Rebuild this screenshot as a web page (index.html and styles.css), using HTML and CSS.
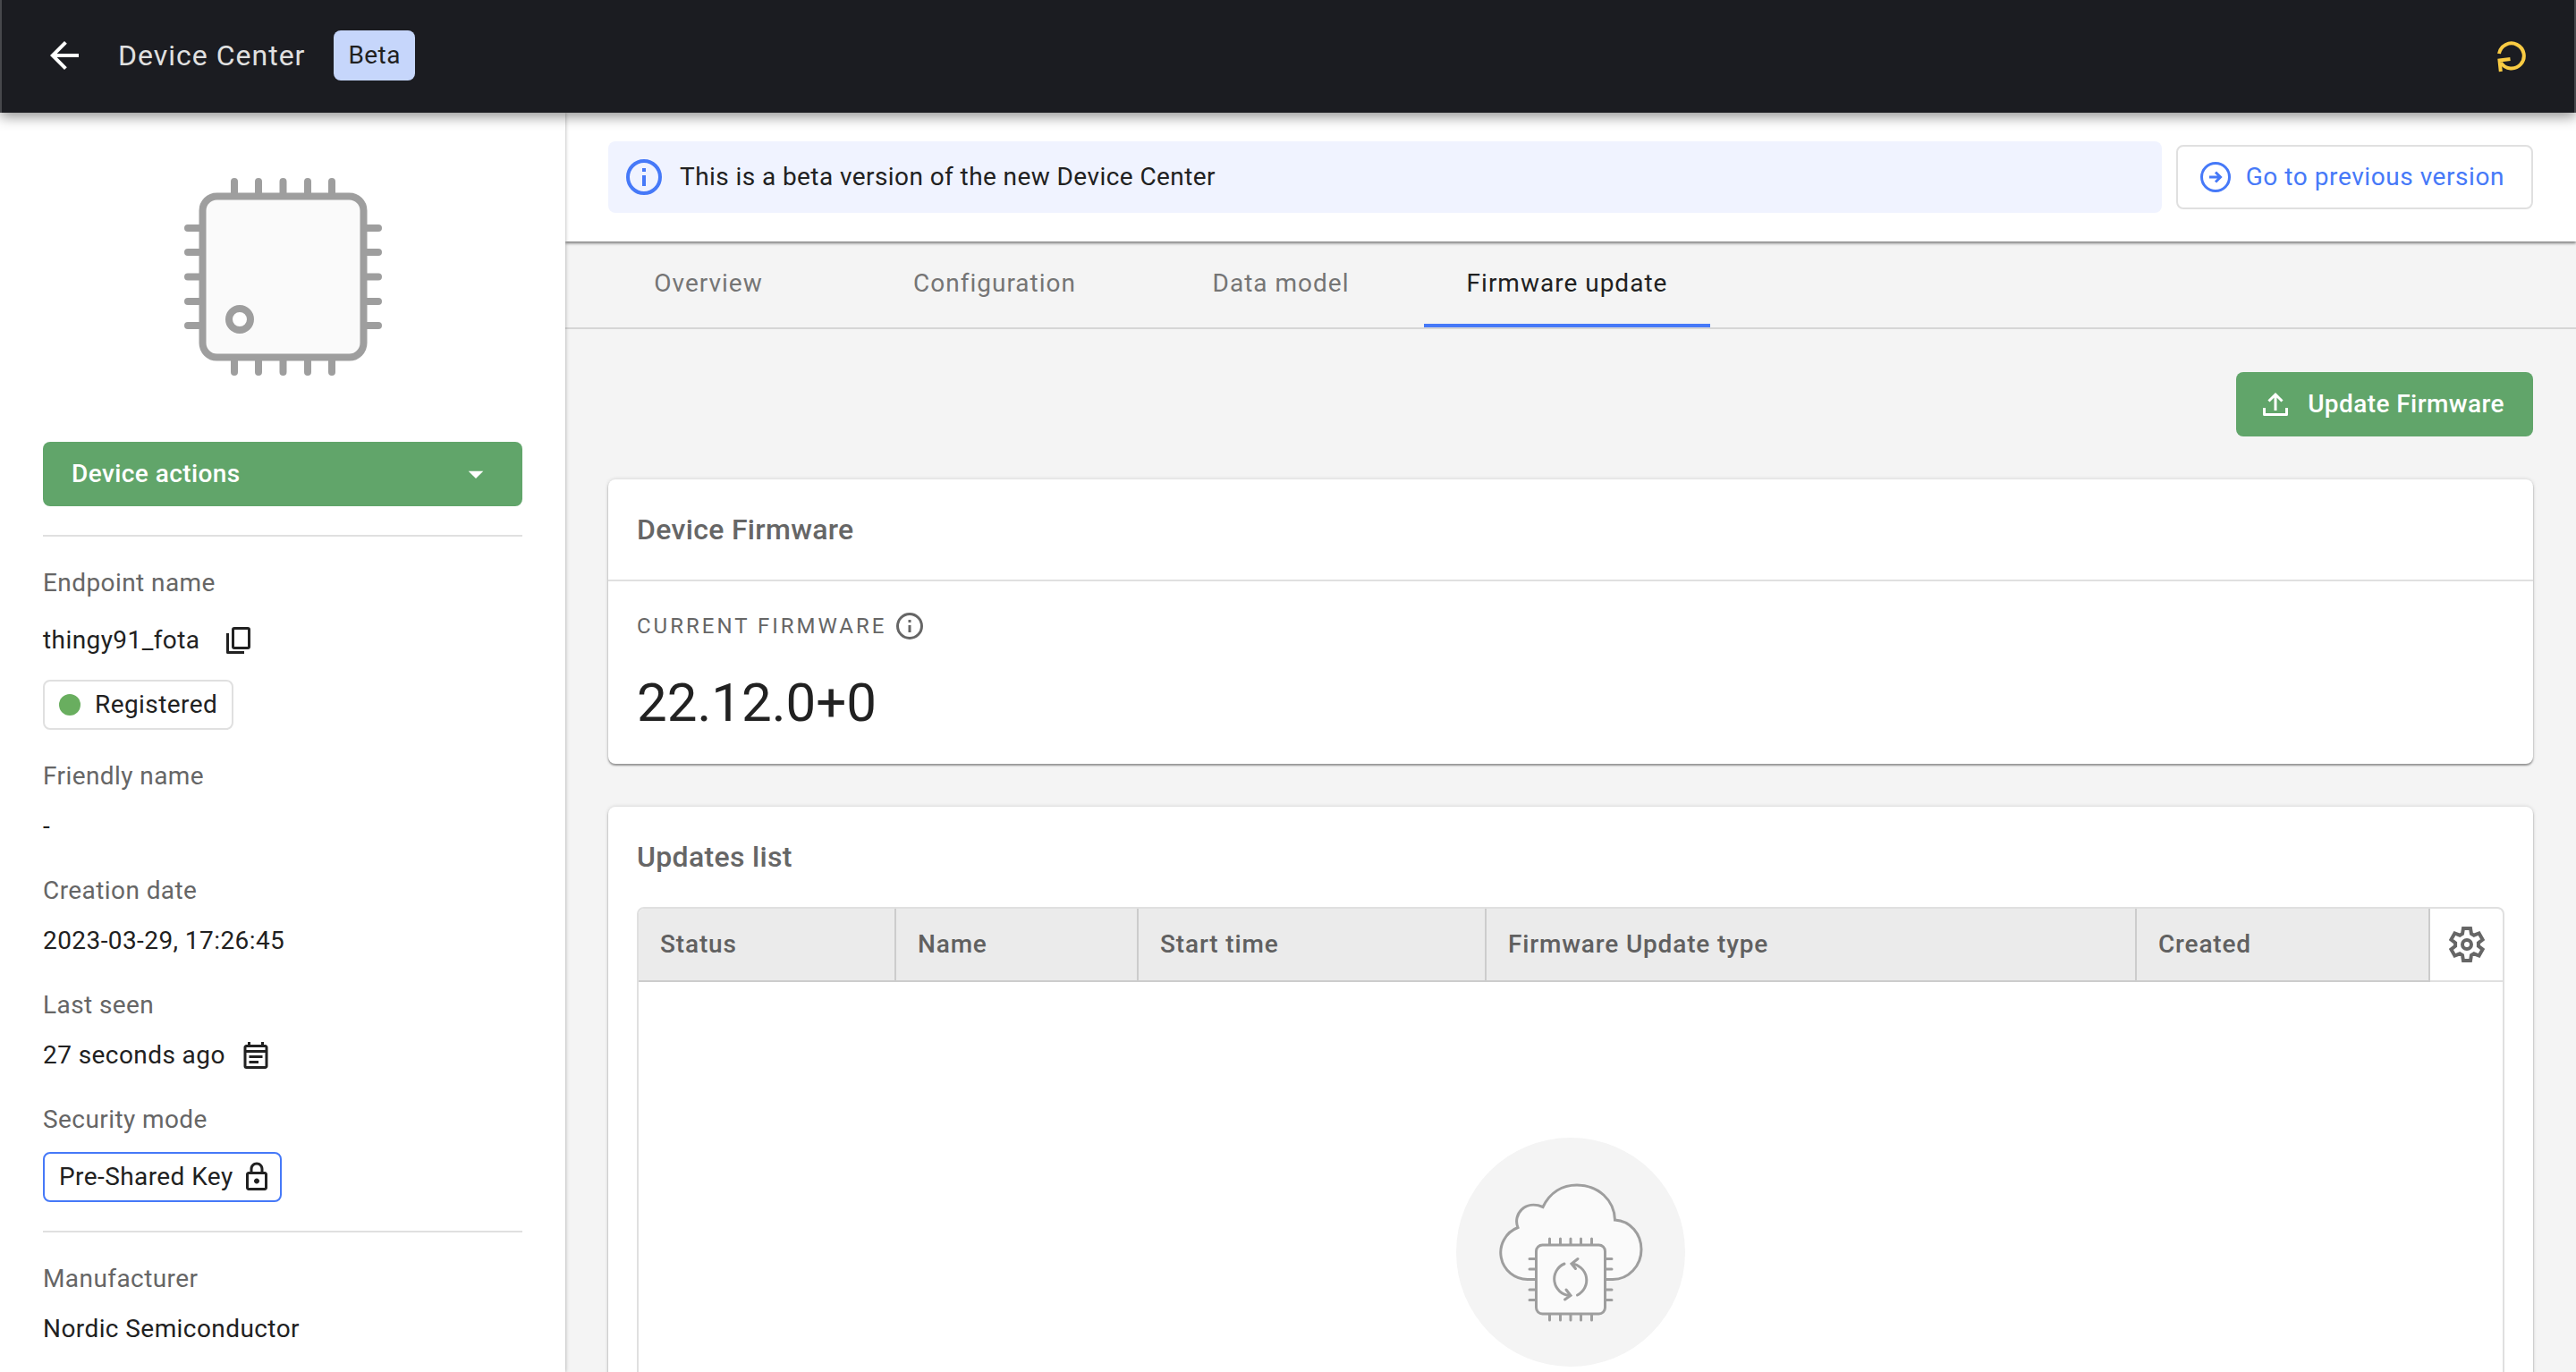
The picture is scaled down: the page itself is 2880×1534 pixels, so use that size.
FILE: index.html
```html
<!DOCTYPE html>
<html lang="en">
<head>
<meta charset="utf-8">
<meta name="viewport" content="width=device-width, initial-scale=1">
<title>Device Center</title>
<link rel="stylesheet" href="styles.css">
</head>
<body>
<div class="app">
  <header class="topbar">
    <button class="icon-button" type="button" aria-label="Back">
      <svg class="icon-48" viewBox="0 0 24 24" fill="currentColor"><path d="M20 11H7.83l5.59-5.59L12 4l-8 8 8 8 1.41-1.41L7.83 13H20z"/></svg>
    </button>
    <h1 class="topbar-title">Device Center</h1>
    <span class="badge">Beta</span>
    <button class="icon-button topbar-refresh" type="button" aria-label="Refresh">
      <svg class="icon-40" viewBox="0 0 40 40" fill="none" stroke="currentColor" stroke-width="4"><path d="M6 18A14 14 0 1 1 8 28"/><path d="M18.500 24 6.500 25.500 7.800 38"/></svg>
    </button>
  </header>

  <div class="body">
    <aside class="sidebar">
      <svg class="device-image" viewBox="0 0 221 221" fill="none" stroke="#9e9e9e" stroke-width="8" stroke-linecap="round">
        <path d="M56 4V217M83 4V217M110.500 4V217M138 4V217M165 4V217M4 56H217M4 83H217M4 110.500H217M4 138H217M4 165H217"/>
        <rect x="20.500" y="20.500" width="180" height="180" rx="16" fill="#fafafa"/>
        <circle cx="62" cy="158" r="12" fill="#fff"/>
      </svg>

      <button class="button button-primary actions" type="button" aria-haspopup="menu">
        Device actions
        <svg class="icon-40" viewBox="0 0 24 24" fill="currentColor"><path d="m7 10 5 5 5-5z"/></svg>
      </button>

      <hr class="divider">

      <dl class="details">
        <div class="detail">
          <dt>Endpoint name</dt>
          <dd class="detail-tall">thingy91_fota
            <button class="icon-button" type="button" aria-label="Copy endpoint name">
              <svg class="icon-32" viewBox="0 0 32 32" fill="none" stroke="currentColor" stroke-width="3"><rect x="9.500" y="2.500" width="18" height="22" rx="1.500"/><path d="M3.500 8V29.500H22" stroke-linejoin="round"/></svg>
            </button>
          </dd>
          <dd class="chip"><span class="dot"></span>Registered</dd>
        </div>
        <div class="detail">
          <dt>Friendly name</dt>
          <dd>-</dd>
        </div>
        <div class="detail">
          <dt>Creation date</dt>
          <dd>2023-03-29, 17:26:45</dd>
        </div>
        <div class="detail">
          <dt>Last seen</dt>
          <dd class="detail-icon">27 seconds ago
            <svg class="icon-36" viewBox="0 0 24 24" fill="currentColor"><path d="M19 4h-1V2h-2v2H8V2H6v2H5c-1.110 0-2 .9-2 2v14a2 2 0 0 0 2 2h14c1.100 0 2-.9 2-2V6c0-1.100-.9-2-2-2zm0 16H5V10h14v10zm0-12H5V6h14v2zM7 12h10v2H7zm0 4h7v2H7z"/></svg>
          </dd>
        </div>
        <div class="detail">
          <dt>Security mode</dt>
          <dd class="chip chip-blue">Pre-Shared Key
            <svg class="icon-36" viewBox="0 0 24 24" fill="currentColor"><path d="M18 8h-1V6c0-2.760-2.240-5-5-5S7 3.240 7 6v2H6c-1.100 0-2 .9-2 2v10c0 1.100.9 2 2 2h12c1.100 0 2-.9 2-2V10c0-1.100-.9-2-2-2zM9 6c0-1.660 1.340-3 3-3s3 1.340 3 3v2H9V6zm9 14H6V10h12v10zm-6-3c1.100 0 2-.9 2-2s-.9-2-2-2-2 .9-2 2 .9 2 2 2z"/></svg>
          </dd>
        </div>
      </dl>

      <hr class="divider">

      <dl class="details">
        <div class="detail">
          <dt>Manufacturer</dt>
          <dd>Nordic Semiconductor</dd>
        </div>
      </dl>
    </aside>

    <main class="main">
      <div class="notice-bar">
        <p class="notice">
          <svg class="icon-40" viewBox="0 0 40 40" fill="none" stroke="currentColor" stroke-width="4"><circle cx="20" cy="20" r="18"/><path d="M20 18v12M20 10v4"/></svg>
          This is a beta version of the new Device Center
        </p>
        <button class="button button-outline" type="button">
          <svg class="icon-36" viewBox="0 0 36 36" fill="none" stroke="currentColor" stroke-width="3"><circle cx="18" cy="18" r="15.500"/><path d="M11 18h12M18 12.500l5.500 5.500-5.500 5.500"/></svg>
          Go to previous version
        </button>
      </div>

      <nav class="tabs" role="tablist">
        <button class="tab" type="button" role="tab" aria-selected="false">Overview</button>
        <button class="tab" type="button" role="tab" aria-selected="false">Configuration</button>
        <button class="tab" type="button" role="tab" aria-selected="false">Data model</button>
        <button class="tab tab-active" type="button" role="tab" aria-selected="true">Firmware update</button>
      </nav>

      <div class="content">
        <button class="button button-primary update" type="button">
          <svg class="icon-36" viewBox="0 0 36 36" fill="none" stroke="currentColor" stroke-width="3"><path d="M5.500 22v7.500h25V22" stroke-linejoin="round"/><path d="M18 25V8M10.500 14.500 18 7l7.500 7.500"/></svg>
          Update Firmware
        </button>

        <section class="card">
          <h2 class="card-title card-title-ruled">Device Firmware</h2>
          <div class="card-body">
            <p class="overline">Current firmware
              <svg class="icon-36" viewBox="0 0 36 36" fill="none" stroke="currentColor" stroke-width="3"><circle cx="18" cy="18" r="13.500"/><path d="M18 17v8M18 11v3"/></svg>
            </p>
            <p class="version">22.12.0+0</p>
          </div>
        </section>

        <section class="card">
          <h2 class="card-title">Updates list</h2>
          <div class="table-frame">
            <table class="table">
              <colgroup><col class="col-status"><col class="col-name"><col class="col-start"><col><col class="col-created"><col class="col-settings"></colgroup>
              <thead>
                <tr>
                  <th>Status</th><th>Name</th><th>Start time</th><th>Firmware Update type</th><th>Created</th>
                  <td class="settings">
                    <button class="icon-button" type="button" aria-label="Table settings">
                      <svg class="icon-40" viewBox="-20 -20 40 40" fill="none" stroke="currentColor" stroke-width="4"><path d="M-5-12-4-18H4L5-12 7.900-10.300 13.600-12.500 17.600-5.500 12.900-1.700V1.700L17.600 5.500 13.600 12.500 7.900 10.300 5 12 4 18H-4L-5 12-7.900 10.300-13.600 12.500-17.600 5.500-12.900 1.700V-1.700L-17.600-5.500-13.600-12.500-7.900-10.300Z"/><circle r="5"/></svg>
                    </button>
                  </td>
                </tr>
              </thead>
            </table>
            <div class="empty">
              <svg class="empty-image" viewBox="0 0 256 256" fill="none" stroke="#9e9e9e" stroke-width="3" stroke-linecap="round">
                <circle cx="128" cy="128" r="128" fill="#f4f4f4" stroke="none"/>
                <path stroke-linecap="butt" fill="#fafafa" d="M90 158.500H80A30 30 0 0 1 69 100.500C63 86 77 69 97 77.500C105 61 119 53 135 53C159 53 177 70 177.500 92C195 93 207 108 207 125C207 143 193 158.500 175 158.500Z"/>
                <path d="M104.500 113V204M116.500 113V204M128 113V204M139.500 113V204M151.500 113V204M82 135.500H174M82 147H174M82 158.500H174M82 170H174M82 181.500H174"/>
                <rect x="89.500" y="120" width="77" height="77" rx="7" fill="#fafafa"/>
                <path d="M121 141A18.500 18.500 0 0 0 127 176.500M121.500 181 128 176.500 123 170M135.500 176A18.500 18.500 0 0 0 129 141M136 135.500 129 141 133.500 146.500"/>
              </svg>
            </div>
          </div>
        </section>
      </div>
    </main>
  </div>
</div>
</body>
</html>
```
FILE: styles.css
```css
* { box-sizing: border-box; }

:root {
  --text: #212121;
  --muted: #666;
  --line: #e0e0e0;
  --blue: #4679f8;
  --green: #61a56a;
  --shadow: 0 2px 2px rgba(0, 0, 0, 0.35), 0 0 4px rgba(0, 0, 0, 0.16);
}

body, h1, h2, p, dl, dd {
  margin: 0;
}

body {
  background: #f4f4f4;
  color: var(--text);
  font: 400 28px/40px Roboto, "Noto Sans", sans-serif;
  letter-spacing: 0.015em;
}

button {
  font: inherit;
  letter-spacing: inherit;
  color: inherit;
  border: 0;
  background: none;
  padding: 0;
  cursor: pointer;
}

svg { display: block; flex: none; }
.icon-32 { width: 32px; height: 32px; }
.icon-36 { width: 36px; height: 36px; }
.icon-40 { width: 40px; height: 40px; }
.icon-48 { width: 48px; height: 48px; }
.icon-button { display: flex; }

.app {
  display: flex;
  flex-direction: column;
  height: 100vh;
  overflow: hidden;
}

/* Top bar */
.topbar {
  position: relative;
  z-index: 2;
  flex: none;
  display: flex;
  align-items: center;
  padding: 34px 50px 36px 46px;
  background: #1b1c21;
  border: solid #47484c;
  border-width: 0 2px;
  color: #fff;
  box-shadow: 0 4px 14px rgba(0, 0, 0, 0.45);
}
.topbar-title {
  margin: 0 32px 0 36px;
  color: #e0e0e0;
  font-size: 32px;
  font-weight: 400;
  letter-spacing: 1px;
}
.badge {
  padding: 8px 16px;
  border-radius: 8px;
  background: #c6d6fb;
  color: var(--text);
}
.topbar-refresh {
  margin-left: auto;
  color: #f9cb43;
}

.body {
  flex: 1;
  display: flex;
  min-height: 0;
}

/* Sidebar */
.sidebar {
  position: relative;
  z-index: 1;
  flex: none;
  width: 632px;
  padding: 73px 48px 32px;
  background: #fff;
  box-shadow: 0 0 4px rgba(0, 0, 0, 0.35);
  overflow: hidden;
}
.device-image {
  width: 221px;
  height: 221px;
  margin: 0 auto 74px;
}
.button {
  display: flex;
  align-items: center;
  min-height: 72px;
  padding: 0 32px;
  border-radius: 8px;
  font-weight: 500;
}
.button-primary {
  background: var(--green);
  color: #fff;
}
.actions {
  justify-content: space-between;
  width: 100%;
}
.divider {
  height: 2px;
  margin: 32px 0;
  border: 0;
  background: var(--line);
}
.details {
  display: flex;
  flex-direction: column;
  gap: 32px;
}
.detail {
  display: flex;
  flex-direction: column;
  align-items: flex-start;
  gap: 16px;
}
.detail dt { color: var(--muted); }
.detail-tall,
.detail-icon {
  display: flex;
  align-items: center;
  gap: 16px;
}
.detail-tall {
  gap: 28px;
  height: 56px;
}
.chip {
  display: flex;
  align-items: center;
  gap: 16px;
  height: 56px;
  padding: 0 16px;
  border: 2px solid var(--line);
  border-radius: 8px;
}
.chip-blue {
  gap: 8px;
  padding: 0 8px 0 16px;
  border-color: var(--blue);
}
.dot {
  width: 24px;
  height: 24px;
  border-radius: 50%;
  background: #69ae5f;
}

/* Main column */
.main {
  flex: 1;
  min-width: 0;
}
.notice-bar {
  position: relative;
  display: flex;
  align-items: center;
  gap: 16px;
  padding: 32px 48px;
  background: #fff;
  box-shadow: 0 2px 3px rgba(0, 0, 0, 0.5);
}
.notice {
  flex: 1;
  display: flex;
  align-items: center;
  gap: 20px;
  padding: 20px;
  border-radius: 8px;
  background: #f0f3ff;
}
.notice svg { color: var(--blue); }
.button-outline {
  gap: 16px;
  padding: 0 30px 0 24px;
  border: 2px solid var(--line);
  color: var(--blue);
  font-weight: 400;
  letter-spacing: 0.02em;
}
.tabs {
  display: flex;
  border-bottom: 2px solid #d6d6d6;
}
.tab {
  width: 320px;
  height: 96px;
  padding-top: 2px;
  border-bottom: 4px solid transparent;
  color: #757575;
  letter-spacing: 1px;
}
.tab-active {
  border-color: var(--blue);
  color: var(--text);
}
.content {
  display: flex;
  flex-direction: column;
  gap: 48px;
  padding: 48px;
}
.update {
  align-self: flex-end;
  gap: 18px;
  padding: 0 32px 0 26px;
}

/* Cards */
.card {
  border-radius: 8px;
  background: #fff;
  box-shadow: var(--shadow);
}
.card-title {
  padding: 36px 32px;
  color: var(--muted);
  font-size: 32px;
  font-weight: 500;
  letter-spacing: 0.01em;
}
.card-title-ruled { border-bottom: 2px solid var(--line); }
.card-body { padding: 30px 32px; }
.overline {
  display: flex;
  align-items: center;
  gap: 8px;
  color: var(--muted);
  font-size: 24px;
  letter-spacing: 3px;
  text-transform: uppercase;
}
.version {
  margin-top: 28px;
  font-size: 60px;
  line-height: 76px;
  letter-spacing: 0;
}

/* Updates table */
.table-frame {
  margin: 0 32px 32px;
  border: 2px solid var(--line);
  border-radius: 8px;
  overflow: hidden;
}
.table {
  width: 100%;
  table-layout: fixed;
  border-collapse: separate;
  border-spacing: 0;
}
.col-status { width: 288px; }
.col-name { width: 271px; }
.col-start { width: 389px; }
.col-created { width: 328px; }
.col-settings { width: 81px; }
.table th {
  height: 82px;
  padding: 0 24px;
  background: #ebebeb;
  border: solid #ccc;
  border-width: 0 2px 2px 0;
  color: #606060;
  font-weight: 500;
  letter-spacing: 0.03em;
  text-align: left;
}
.settings {
  padding: 0;
  border-bottom: 2px solid var(--line);
  color: var(--muted);
}
.settings .icon-button { margin: 0 auto; }
.empty {
  display: flex;
  justify-content: center;
  padding: 174px 0;
}
.empty-image {
  width: 256px;
  height: 256px;
}
```
